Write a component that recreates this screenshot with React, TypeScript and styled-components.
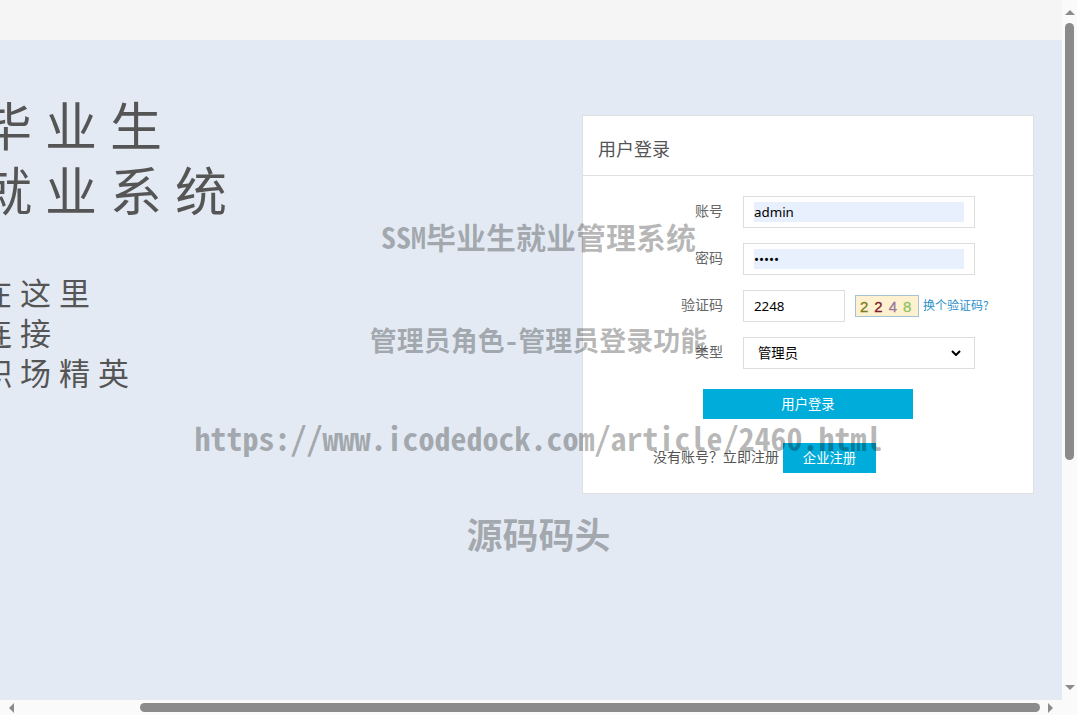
import React from 'react';
import styled, {createGlobalStyle} from "styled-components";

const GlobalStyle = createGlobalStyle`
  html, body {
    margin: 0;
    padding: 0;
    height: 100%;
    overflow: hidden;
    background: #ffffff;
  }
  * {
    box-sizing: border-box;
  }
  body {
    font-family: "Noto Sans CJK SC", "Noto Sans", sans-serif;
  }
`

const Field = (props: { label: string, children: React.ReactNode }) => {
    return (
        <Row>
            <Label>{props.label}</Label>
            {props.children}
        </Row>
    )
}

const captcha = [
    {char: '2', color: '#7c7c22'},
    {char: '2', color: '#7d1c2e'},
    {char: '4', color: '#97789c'},
    {char: '8', color: '#8fc463'},
]

export default function App() {
    return (
        <Page>
            <GlobalStyle/>
            <Viewport>
                <TopBar/>
                <Hero>
                    <Intro>
                        <Headline>
                            <div>毕业生</div>
                            <div>就业系统</div>
                        </Headline>
                        <Slogan>
                            <div>在这里</div>
                            <div>连接</div>
                            <div>职场精英</div>
                        </Slogan>
                    </Intro>
                    <Card>
                        <CardTitle>用户登录</CardTitle>
                        <Form>
                            <Field label="账号">
                                <TextInput defaultValue="admin" autofilled/>
                            </Field>
                            <Field label="密码">
                                <TextInput type="password" defaultValue="admin" autofilled/>
                            </Field>
                            <Field label="验证码">
                                <CaptchaRow>
                                    <CodeInput defaultValue="2248"/>
                                    <CaptchaImage>
                                        {captcha.map((el, i) => <CaptchaChar key={i} color={el.color}>{el.char}</CaptchaChar>)}
                                    </CaptchaImage>
                                    <RefreshLink href="#">换个验证码?</RefreshLink>
                                </CaptchaRow>
                            </Field>
                            <Field label="类型">
                                <SelectBox>
                                    <RoleSelect defaultValue="admin">
                                        <option value="admin">管理员</option>
                                        <option value="company">企业</option>
                                    </RoleSelect>
                                    <Chevron viewBox="0 0 10 6">
                                        <path d="M1 1 L5 5 L9 1" fill="none" stroke="#000000" strokeWidth="2"/>
                                    </Chevron>
                                </SelectBox>
                            </Field>
                            <LoginButton type="button">用户登录</LoginButton>
                            <RegisterRow>
                                <RegisterText>没有账号？立即注册</RegisterText>
                                <RegisterButton type="button">企业注册</RegisterButton>
                            </RegisterRow>
                        </Form>
                    </Card>
                </Hero>
            </Viewport>
            <VerticalTrack>
                <Arrow direction="up"/>
                <VerticalThumb/>
                <Arrow direction="down"/>
            </VerticalTrack>
            <HorizontalTrack>
                <Arrow direction="left"/>
                <HorizontalThumb/>
                <Arrow direction="right"/>
            </HorizontalTrack>
            <Corner/>
            <Watermark>
                <WatermarkLine size={30} rowHeight={103}>SSM毕业生就业管理系统</WatermarkLine>
                <WatermarkLine size={27} rowHeight={103}>管理员角色-管理员登录功能</WatermarkLine>
                <WatermarkLine size={32} rowHeight={92}>https://www.icodedock.com/article/2460.html</WatermarkLine>
                <WatermarkLine size={36} rowHeight={100}>源码码头</WatermarkLine>
            </Watermark>
        </Page>
    );
};

const Page = styled.div`
  position: relative;
  width: 1077px;
  height: 715px;
  overflow: hidden;
  display: grid;
  grid-template-columns: 1062px 15px;
  grid-template-rows: 700px 15px;
`

const Viewport = styled.div`
  display: flex;
  flex-direction: column;
  overflow: hidden;
  background-color: #e3eaf3;
`

const TopBar = styled.div`
  height: 40px;
  flex-shrink: 0;
  background-color: #f5f5f5;
`

const Hero = styled.div`
  display: flex;
  justify-content: space-between;
  align-items: flex-start;
  padding: 75px 28px 0 0;
`

const Intro = styled.div`
  margin: -24px 0 0 -20px;
  color: #555555;
`

const Headline = styled.div`
  font-size: 52px;
  line-height: 65px;
  letter-spacing: 13px;
`

const Slogan = styled.div`
  margin: 51px 0 0 1px;
  font-size: 31px;
  line-height: 40px;
  letter-spacing: 8px;
`

const Card = styled.div`
  width: 452px;
  height: 379px;
  background-color: #ffffff;
  border: 1px solid #e0e0e0;
`

const CardTitle = styled.div`
  height: 60px;
  padding-left: 15px;
  font-size: 18px;
  line-height: 64px;
  color: #555555;
  border-bottom: 1px solid #e0e0e0;
`

const Form = styled.div`
  display: flex;
  flex-direction: column;
  padding-top: 20px;
`

const Row = styled.div`
  display: grid;
  grid-template-columns: 140px auto;
  justify-content: start;
  column-gap: 20px;
  align-items: center;
  height: 32px;
  margin-bottom: 15px;
`

const Label = styled.label`
  padding-bottom: 4px;
  font-size: 14px;
  color: #666666;
  text-align: right;
`

const TextInput = styled.input<{ autofilled?: boolean }>`
  width: 232px;
  height: 32px;
  padding: 5px 10px;
  border: 1px solid #dddddd;
  outline: none;
  font-family: "Noto Sans", sans-serif;
  font-size: 13.33px;
  color: #000000;
  background-color: ${props => props.autofilled ? '#e8f0fe' : '#ffffff'};
  background-clip: content-box;
`

const CodeInput = styled(TextInput)`
  width: 102px;
`

const CaptchaRow = styled.div`
  display: flex;
  align-items: center;
`

const CaptchaImage = styled.div`
  display: flex;
  align-items: center;
  gap: 6px;
  width: 64px;
  height: 22px;
  margin-left: 10px;
  padding-left: 4px;
  background-color: #fdf1cf;
  border: 1px solid #a5c3d4;
`

const CaptchaChar = styled.span<{ color: string }>`
  font-family: "Liberation Sans", sans-serif;
  font-size: 15px;
  color: ${props => props.color};
  -webkit-text-stroke: 0.3px ${props => props.color};
`

const RefreshLink = styled.a`
  margin: 0 0 4px 4px;
  font-size: 12px;
  color: #2b8fc9;
  text-decoration: none;
`

const SelectBox = styled.div`
  position: relative;
  width: 232px;
  height: 32px;
`

const RoleSelect = styled.select`
  display: block;
  width: 100%;
  height: 100%;
  padding: 0 0 2px 14px;
  border: 1px solid #dddddd;
  border-radius: 0;
  outline: none;
  appearance: none;
  font-family: "Noto Sans CJK SC", sans-serif;
  font-size: 13.33px;
  color: #000000;
  background-color: #ffffff;
`

const Chevron = styled.svg`
  position: absolute;
  top: 13px;
  right: 14px;
  width: 10px;
  height: 6px;
  pointer-events: none;
`

const LoginButton = styled.button`
  width: 210px;
  height: 30px;
  margin: 5px 0 0 120px;
  padding: 0 0 2px;
  border: none;
  font-family: inherit;
  font-size: 13.33px;
  color: #ffffff;
  background-color: #00acd9;
`

const RegisterRow = styled.div`
  display: flex;
  align-items: center;
  gap: 4px;
  margin: 24px 0 0 70px;
  font-size: 14px;
  color: #555555;
`

const RegisterText = styled.span`
  padding-bottom: 4px;
`

const RegisterButton = styled(LoginButton)`
  width: 93px;
  margin: 0;
`

const VerticalTrack = styled.div`
  display: flex;
  flex-direction: column;
  align-items: center;
  padding: 10px 0;
  background-color: #fafafa;
`

const VerticalThumb = styled.div`
  width: 9px;
  height: 437px;
  margin: 8px 0 auto;
  border-radius: 5px;
  background-color: #8b8b8b;
`

const HorizontalTrack = styled.div`
  display: flex;
  align-items: center;
  padding-left: 9px;
  background-color: #fafafa;
`

const HorizontalThumb = styled.div`
  width: 900px;
  height: 9px;
  margin: 0 8px 0 126px;
  flex-shrink: 0;
  border-radius: 5px;
  background-color: #8b8b8b;
`

const Corner = styled.div`
  background-color: #fafafa;
`

const arrowBorders = {
    up: 'border-width: 0 5px 5px; border-color: transparent transparent #8b8b8b;',
    down: 'border-width: 5px 5px 0; border-color: #8b8b8b transparent transparent;',
    left: 'border-width: 5px 5px 5px 0; border-color: transparent #8b8b8b transparent transparent;',
    right: 'border-width: 5px 0 5px 5px; border-color: transparent transparent transparent #8b8b8b;',
}

const Arrow = styled.i<{ direction: keyof typeof arrowBorders }>`
  display: block;
  width: 0;
  height: 0;
  flex-shrink: 0;
  border-style: solid;
  ${props => arrowBorders[props.direction]}
`

const Watermark = styled.div`
  position: absolute;
  top: 185px;
  left: 0;
  width: 1077px;
  display: flex;
  flex-direction: column;
  align-items: center;
  pointer-events: none;
`

const WatermarkLine = styled.div<{ size: number, rowHeight: number }>`
  height: ${props => props.rowHeight}px;
  line-height: ${props => props.rowHeight}px;
  font-family: "Noto Sans Mono CJK SC", "Liberation Mono", "Noto Sans CJK SC", monospace;
  font-size: ${props => props.size}px;
  font-weight: 700;
  white-space: nowrap;
  color: rgba(0, 0, 0, 0.28);
`
